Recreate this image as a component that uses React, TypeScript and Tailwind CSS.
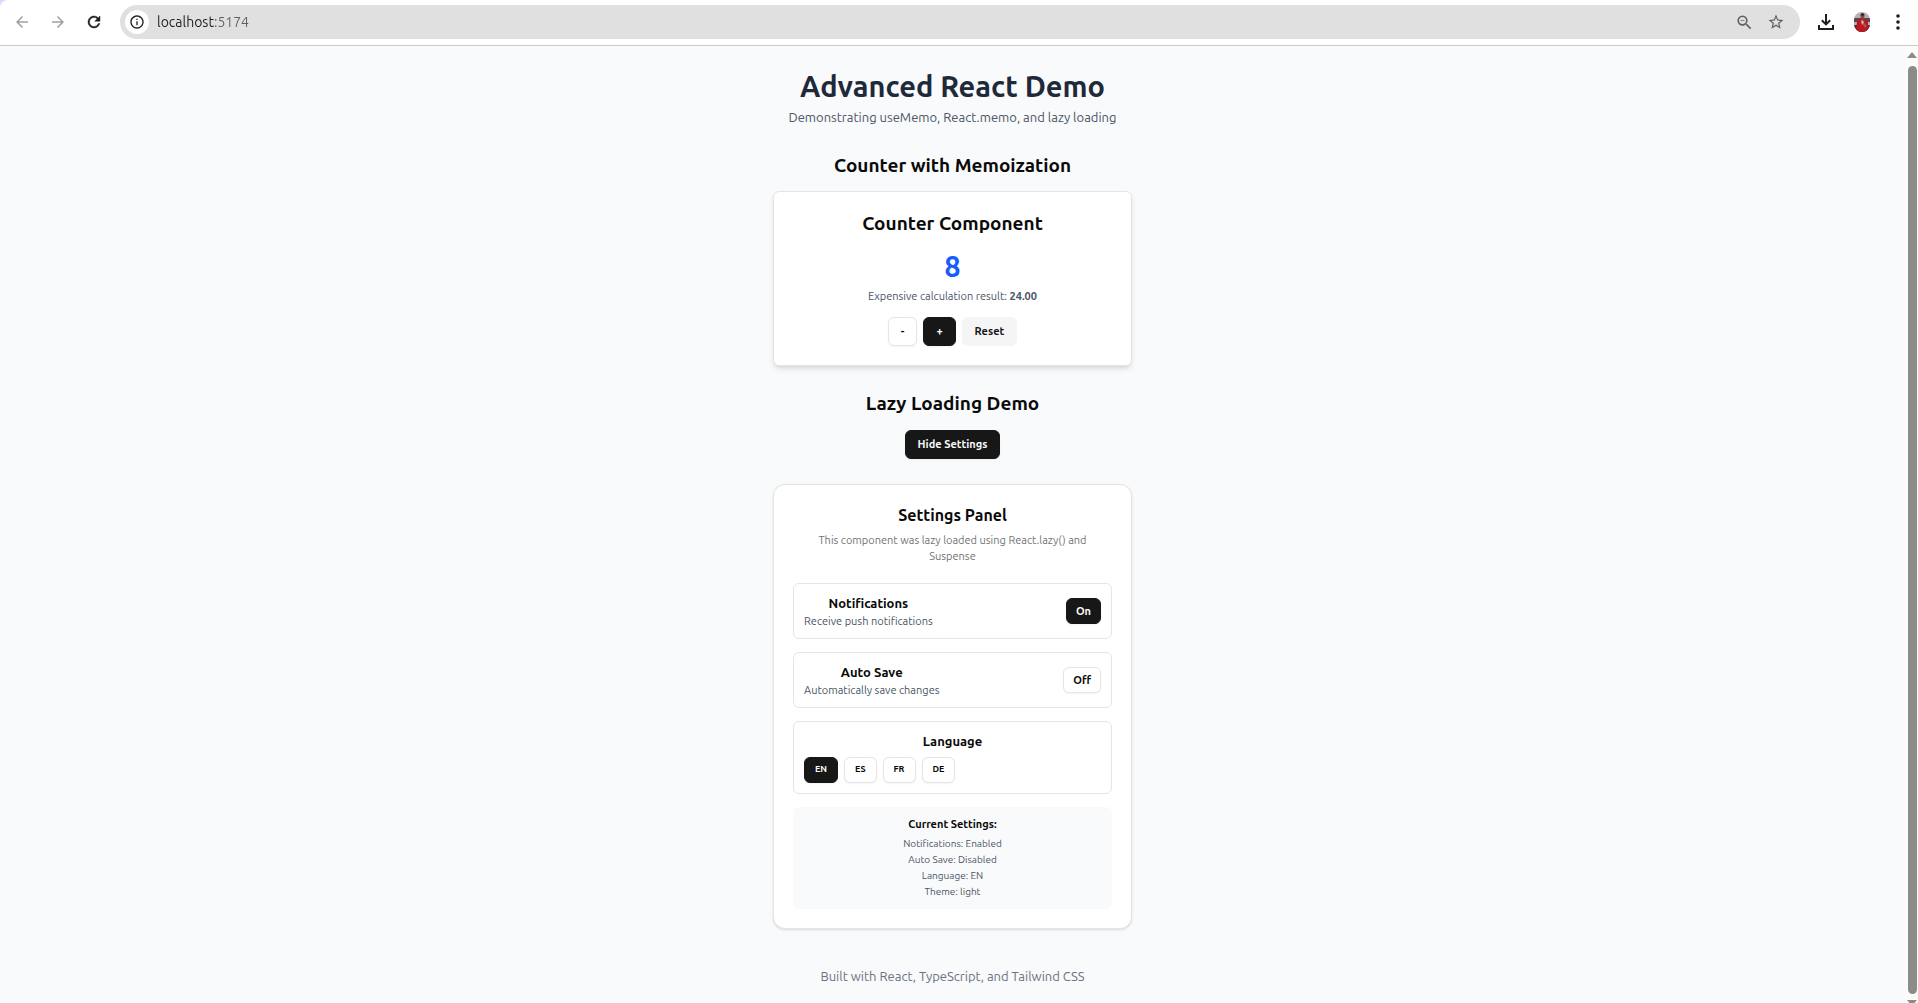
import { useMemo, useState } from "react";
import type { ReactNode } from "react";
import {
  MdArrowBack,
  MdArrowForward,
  MdInfoOutline,
  MdStarBorder,
  MdZoomOut,
} from "react-icons/md";

type Variant = "solid" | "outline" | "muted";

const variants: Record<Variant, string> = {
  solid: "border border-[#171717] bg-[#171717] text-neutral-50 shadow-xs",
  outline: "border border-neutral-200 bg-white text-[#0a0a0a] shadow-xs",
  muted: "border border-neutral-100 bg-neutral-100 text-[#171717]",
};

const sizes = {
  md: "h-[29px] px-3 text-[11px]",
  sm: "h-[26px] px-[9px] text-[11px]",
  xs: "h-[26px] px-2.5 text-[9px]",
};

function Button({
  variant,
  size = "md",
  onClick,
  children,
}: {
  variant: Variant;
  size?: keyof typeof sizes;
  onClick: () => void;
  children: ReactNode;
}) {
  return (
    <button
      type="button"
      onClick={onClick}
      className={`inline-flex shrink-0 items-center justify-center rounded-md font-semibold ${variants[variant]} ${sizes[size]}`}
    >
      {children}
    </button>
  );
}

function ReloadIcon() {
  return (
    <svg viewBox="0 0 24 24" className="size-[18px]" fill="currentColor" stroke="currentColor" strokeWidth="0.6">
      <path d="M17.65 6.35A7.958 7.958 0 0 0 12 4c-4.42 0-7.99 3.58-7.99 8s3.57 8 7.99 8c3.73 0 6.84-2.55 7.73-6h-2.08A5.99 5.99 0 0 1 12 18c-3.31 0-6-2.69-6-6s2.69-6 6-6c1.66 0 3.14.69 4.22 1.78L13 11h7V4l-2.35 2.35z" />
    </svg>
  );
}

function DownloadIcon() {
  return (
    <svg viewBox="0 0 18 18" className="size-[18px]" fill="none" stroke="currentColor" strokeWidth="2">
      <path d="M9 1v10M4.8 7.2 9 11.4l4.2-4.2M2 12v4h14v-4" />
    </svg>
  );
}

function MenuIcon() {
  return (
    <svg viewBox="0 0 18 18" className="size-[18px]" fill="currentColor">
      <circle cx="9" cy="3" r="1.8" />
      <circle cx="9" cy="9" r="1.8" />
      <circle cx="9" cy="15" r="1.8" />
    </svg>
  );
}

function Avatar() {
  return (
    <svg viewBox="0 0 18 20" className="h-5 w-[18px]" aria-hidden="true">
      <clipPath id="avatar-clip">
        <rect x="1" width="16" height="20" rx="8" />
      </clipPath>
      <g clipPath="url(#avatar-clip)">
        <rect width="18" height="20" fill="#b9aeb8" />
        <rect y="6" width="18" height="4" fill="#5c4552" />
        <path d="M0 13h18v7H0z" fill="#6a2222" />
        <path d="M4 9l4-2h3l4 3v10H3z" fill="#b81822" />
        <ellipse cx="9.5" cy="4.5" rx="1.9" ry="2.8" fill="#8a4a3a" />
        <path d="M7.5 3.5c0-3 4-3 4 0z" fill="#2b1a1c" />
        <path d="M8 9l2-1 1 3-2 2z" fill="#d9a9a2" />
        <path d="M11 11l3 3-2 2-2-3z" fill="#a6584a" />
      </g>
    </svg>
  );
}

function Toolbar() {
  return (
    <div className="bg-[#e6d5fb]">
      <div className="flex h-[46px] items-center rounded-tl-lg border-b border-[#c9c9c9] bg-white pr-[11px] pb-[9px] pt-[8px] pl-[13px] text-[#1f1f1f]">
        <button type="button" aria-label="Back" disabled className="text-[#a0a0a0]">
          <MdArrowBack size={18} />
        </button>
        <button type="button" aria-label="Forward" disabled className="ml-[18px] text-[#a0a0a0]">
          <MdArrowForward size={18} />
        </button>
        <button type="button" aria-label="Reload" className="ml-[18px]">
          <ReloadIcon />
        </button>
        <div className="ml-[17px] flex h-[34px] grow items-center rounded-full bg-[#e0e0e0] pr-[15px] pl-[5px] text-[#606060]">
          <button
            type="button"
            aria-label="View site information"
            className="flex size-6 items-center justify-center rounded-full bg-white text-[#1f1f1f]"
          >
            <MdInfoOutline size={16} />
          </button>
          <input
            type="text"
            aria-label="Address"
            defaultValue="localhost:5174"
            className="ml-2 h-6 grow bg-linear-to-r from-[#1f1f1f] from-[57px] to-[#606060] to-[57px] bg-clip-text text-sm text-transparent outline-none"
          />
          <button type="button" aria-label="Zoom out">
            <MdZoomOut size={19} />
          </button>
          <button type="button" aria-label="Bookmark this page" className="ml-[13px]">
            <MdStarBorder size={18} />
          </button>
        </div>
        <button type="button" aria-label="Downloads" className="ml-[17px]">
          <DownloadIcon />
        </button>
        <button type="button" aria-label="Profile" className="ml-[18px]">
          <Avatar />
        </button>
        <button type="button" aria-label="Menu" className="ml-[18px]">
          <MenuIcon />
        </button>
      </div>
    </div>
  );
}

function Scrollbar() {
  return (
    <div className="flex w-[13px] shrink-0 flex-col items-end bg-[#fcfcfc] pt-1.5 pr-px" aria-hidden="true">
      <svg viewBox="0 0 10 6" className="h-1.5 w-2.5 shrink-0" fill="#8b8b8b">
        <path d="M0 6 5 0l5 6z" />
      </svg>
      <div className="mt-2 w-[9px] grow rounded-full bg-[#8b8b8b]" />
      <svg viewBox="0 0 10 3" className="mt-1.5 h-[3px] w-2.5 shrink-0" fill="#8b8b8b">
        <path d="M0 0h10L7.5 3h-5z" />
      </svg>
    </div>
  );
}

function Counter() {
  const [count, setCount] = useState(8);
  const result = useMemo(() => (count * 3).toFixed(2), [count]);
  return (
    <div className="flex flex-col items-center rounded-md border border-neutral-200 bg-white px-[18px] pt-[18px] pb-[19px] shadow-md">
      <h3 className="text-[19px] leading-[26px] font-bold">Counter Component</h3>
      <div className="mt-3.5 text-[29px] leading-8 font-bold text-[#155dfc]">{count}</div>
      <p className="mt-1.5 text-[11px] leading-4 text-gray-600">
        Expensive calculation result: <strong>{result}</strong>
      </p>
      <div className="mt-[13px] flex gap-1.5">
        <Button variant="outline" onClick={() => setCount(count - 1)}>
          -
        </Button>
        <Button variant="solid" onClick={() => setCount(count + 1)}>
          +
        </Button>
        <Button variant="muted" onClick={() => setCount(0)}>
          Reset
        </Button>
      </div>
    </div>
  );
}

function ToggleRow({
  title,
  note,
  on,
  onToggle,
}: {
  title: string;
  note: string;
  on: boolean;
  onToggle: () => void;
}) {
  return (
    <div className="flex h-14 items-center justify-between rounded-md border border-neutral-200 px-2.5">
      <div>
        <h4 className="text-[13px] leading-[19px] font-semibold">{title}</h4>
        <p className="text-[11px] leading-4 text-gray-600">{note}</p>
      </div>
      <Button variant={on ? "solid" : "outline"} size="sm" onClick={onToggle}>
        {on ? "On" : "Off"}
      </Button>
    </div>
  );
}

const languages = ["EN", "ES", "FR", "DE"];

function SettingsPanel() {
  const [notifications, setNotifications] = useState(true);
  const [autoSave, setAutoSave] = useState(false);
  const [language, setLanguage] = useState("EN");
  return (
    <div className="rounded-xl border border-neutral-200 bg-white p-[19px] shadow-sm">
      <h3 className="text-base leading-[22px] font-bold">Settings Panel</h3>
      <p className="mt-1.5 px-4 text-[11px] leading-4 text-neutral-500">
        This component was lazy loaded using React.lazy() and Suspense
      </p>
      <div className="mt-[19px] flex flex-col gap-[13px]">
        <ToggleRow
          title="Notifications"
          note="Receive push notifications"
          on={notifications}
          onToggle={() => setNotifications(!notifications)}
        />
        <ToggleRow
          title="Auto Save"
          note="Automatically save changes"
          on={autoSave}
          onToggle={() => setAutoSave(!autoSave)}
        />
        <div className="rounded-md border border-neutral-200 p-2.5">
          <h4 className="text-[13px] leading-[19px] font-semibold">Language</h4>
          <div className="mt-1.5 flex gap-1.5">
            {languages.map((code) => (
              <Button
                key={code}
                variant={code === language ? "solid" : "outline"}
                size="xs"
                onClick={() => setLanguage(code)}
              >
                {code}
              </Button>
            ))}
          </div>
        </div>
        <div className="rounded-md bg-gray-50 p-[9px]">
          <h4 className="text-[11px] leading-4 font-semibold">Current Settings:</h4>
          <div className="mt-1 text-[10px] leading-4 text-gray-600">
            <p>Notifications: {notifications ? "Enabled" : "Disabled"}</p>
            <p>Auto Save: {autoSave ? "Enabled" : "Disabled"}</p>
            <p>Language: {language}</p>
            <p>Theme: light</p>
          </div>
        </div>
      </div>
    </div>
  );
}

export default function App() {
  const [open, setOpen] = useState(true);
  return (
    <div className="flex h-screen flex-col overflow-hidden font-['Ubuntu','Noto_Sans',sans-serif] text-[#0a0a0a]">
      <Toolbar />
      <div className="flex min-h-0 grow bg-gray-50">
        <main className="grow overflow-hidden text-center">
          <header className="pt-6">
            <h1 className="text-[29px] leading-8 font-bold text-gray-800">Advanced React Demo</h1>
            <p className="mt-1.5 text-[13px] leading-[19px] text-gray-600">
              Demonstrating useMemo, React.memo, and lazy loading
            </p>
          </header>
          <div className="mx-auto w-full max-w-[359px]">
            <section className="mt-[25px]">
              <h2 className="mb-[13px] text-[19px] leading-[26px] font-bold">Counter with Memoization</h2>
              <Counter />
            </section>
            <section className="mt-6">
              <h2 className="text-[19px] leading-[26px] font-bold">Lazy Loading Demo</h2>
              <div className="mt-3.5 mb-[25px] flex justify-center">
                <Button variant="solid" onClick={() => setOpen(!open)}>
                  {open ? "Hide Settings" : "Show Settings"}
                </Button>
              </div>
              {open && <SettingsPanel />}
            </section>
          </div>
          <footer className="mt-[38px] pb-6 text-[13px] leading-[19px] text-gray-500">
            Built with React, TypeScript, and Tailwind CSS
          </footer>
        </main>
        <Scrollbar />
      </div>
    </div>
  );
}
